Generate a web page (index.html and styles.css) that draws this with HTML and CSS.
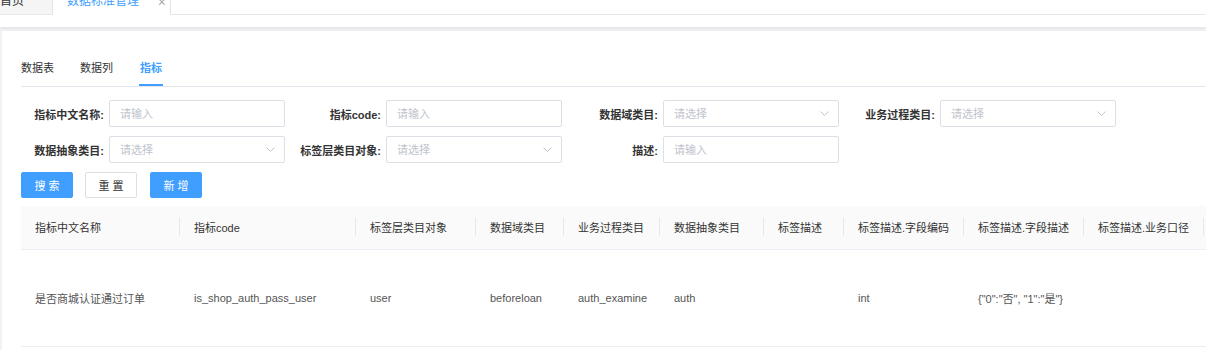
FILE: index.html
```html
<!DOCTYPE html>
<html lang="zh-CN">
<head>
    <meta charset="UTF-8">
    <meta name="viewport" content="width=device-width, initial-scale=1.0">
    <title>数据标准管理</title>
    <link rel="stylesheet" href="styles.css">
</head>
<body>

    <!-- Page tabs at the top -->
    <div class="topbar">
        <div class="page-tabs">
            <div class="page-tab">首页</div>
            <div class="page-tab active">数据标准管理<span class="tab-close">×</span></div>
            <div class="tab-fill"></div>
        </div>
    </div>

    <div class="main">
        <div class="card">

            <!-- Sub tabs -->
            <div class="sub-tabs">
                <div class="sub-tab">数据表</div>
                <div class="sub-tab">数据列</div>
                <div class="sub-tab active">指标</div>
            </div>

            <!-- Search form -->
            <div class="search-form">
                <div class="form-item">
                    <label>指标中文名称:</label>
                    <input type="text" placeholder="请输入">
                </div>
                <div class="form-item">
                    <label>指标code:</label>
                    <input type="text" placeholder="请输入">
                </div>
                <div class="form-item">
                    <label>数据域类目:</label>
                    <div class="select">
                        <input type="text" placeholder="请选择" readonly>
                        <svg class="arrow" width="9" height="5" viewBox="0 0 9 5"><path d="M0.5 0.5 L4.5 4.5 L8.5 0.5" fill="none" stroke="#c0c4cc" stroke-width="1"/></svg>
                    </div>
                </div>
                <div class="form-item">
                    <label>业务过程类目:</label>
                    <div class="select">
                        <input type="text" placeholder="请选择" readonly>
                        <svg class="arrow" width="9" height="5" viewBox="0 0 9 5"><path d="M0.5 0.5 L4.5 4.5 L8.5 0.5" fill="none" stroke="#c0c4cc" stroke-width="1"/></svg>
                    </div>
                </div>
                <div class="form-item">
                    <label>数据抽象类目:</label>
                    <div class="select">
                        <input type="text" placeholder="请选择" readonly>
                        <svg class="arrow" width="9" height="5" viewBox="0 0 9 5"><path d="M0.5 0.5 L4.5 4.5 L8.5 0.5" fill="none" stroke="#c0c4cc" stroke-width="1"/></svg>
                    </div>
                </div>
                <div class="form-item">
                    <label>标签层类目对象:</label>
                    <div class="select">
                        <input type="text" placeholder="请选择" readonly>
                        <svg class="arrow" width="9" height="5" viewBox="0 0 9 5"><path d="M0.5 0.5 L4.5 4.5 L8.5 0.5" fill="none" stroke="#c0c4cc" stroke-width="1"/></svg>
                    </div>
                </div>
                <div class="form-item">
                    <label>描述:</label>
                    <input type="text" placeholder="请输入">
                </div>
            </div>

            <!-- Buttons -->
            <div class="actions">
                <button class="btn btn-primary">搜 索</button>
                <button class="btn">重 置</button>
                <button class="btn btn-primary">新 增</button>
            </div>

            <!-- Result table -->
            <div class="table-wrap">
                <table class="data-table">
                    <colgroup>
                        <col style="width:159px">
                        <col style="width:176px">
                        <col style="width:120px">
                        <col style="width:88px">
                        <col style="width:96px">
                        <col style="width:104px">
                        <col style="width:80px">
                        <col style="width:120px">
                        <col style="width:120px">
                        <col style="width:120px">
                        <col style="width:120px">
                    </colgroup>
                    <thead>
                        <tr>
                            <th>指标中文名称</th>
                            <th>指标code</th>
                            <th>标签层类目对象</th>
                            <th>数据域类目</th>
                            <th>业务过程类目</th>
                            <th>数据抽象类目</th>
                            <th>标签描述</th>
                            <th>标签描述.字段编码</th>
                            <th>标签描述.字段描述</th>
                            <th>标签描述.业务口径</th>
                            <th>操作</th>
                        </tr>
                    </thead>
                    <tbody>
                        <tr>
                            <td>是否商城认证通过订单</td>
                            <td>is_shop_auth_pass_user</td>
                            <td>user</td>
                            <td>beforeloan</td>
                            <td>auth_examine</td>
                            <td>auth</td>
                            <td></td>
                            <td>int</td>
                            <td>{"0":"否", "1":"是"}</td>
                            <td></td>
                            <td></td>
                        </tr>
                    </tbody>
                </table>
            </div>

        </div>
    </div>

</body>
</html>
```

FILE: styles.css
```css
/* Reset */
html, body {
    margin: 0;
    padding: 0;
    font-family: "Liberation Sans", "Noto Sans CJK SC", sans-serif;
    background-color: #ffffff;
    height: 100%;
    overflow: hidden;
}

/* Top page tabs */
.topbar {
    height: 27px;
    background-color: #fff;
    position: relative;
    z-index: 1;
    box-shadow: 0 1px 4px rgba(0, 0, 0, 0.08);
}

.page-tabs {
    display: flex;
    height: 15px;
    overflow: hidden;
}

.page-tab {
    height: 23px;
    margin-top: -8px;
    line-height: 18px;
    font-size: 12px;
    color: #333;
    box-sizing: border-box;
    border-bottom: 1px solid #e8e8e8;
    border-right: 1px solid #e4e4e4;
    background-color: #f5f5f5;
    width: 53px;
}

.page-tab.active {
    width: 117px;
    margin-left: 1px;
    padding-left: 13px;
    background-color: #fff;
    border-bottom: none;
    color: #409eff;
    position: relative;
}

.tab-close {
    position: absolute;
    right: 4px;
    top: 1px;
    color: #aaa;
    font-size: 14px;
}

.tab-fill {
    flex: 1;
    border-bottom: 1px solid #e8e8e8;
}

/* Content area */
.main {
    background-color: #f0f2f5;
    padding: 4px 0 0 2px;
    height: calc(100% - 27px);
    box-sizing: border-box;
}

.card {
    background-color: #fff;
    padding: 20px 0 0 19px;
    height: 100%;
    box-sizing: border-box;
    overflow: hidden;
}

/* Sub tabs */
.sub-tabs {
    display: flex;
    height: 36px;
    border-bottom: 1px solid #e4e7ed;
    box-sizing: border-box;
}

.sub-tab {
    line-height: 35px;
    font-size: 11px;
    color: #303133;
    padding: 0 13px;
}

.sub-tab:first-child {
    padding-left: 0;
}

.sub-tab.active {
    color: #409eff;
    font-weight: bold;
    box-shadow: inset 0 -2px 0 #409eff;
    padding: 0;
    margin-left: 13px;
    width: 24px;
    text-align: center;
}

/* Search form */
.search-form {
    display: grid;
    grid-template-columns: repeat(4, 264px);
    column-gap: 13px;
    row-gap: 9px;
    margin-top: 13px;
}

.form-item {
    display: flex;
    align-items: center;
}

.form-item label {
    width: 88px;
    box-sizing: border-box;
    padding-right: 5px;
    text-align: right;
    font-size: 11px;
    font-weight: bold;
    color: #333;
}

.form-item input {
    width: 176px;
    height: 27px;
    box-sizing: border-box;
    border: 1px solid #dcdfe6;
    border-radius: 2px;
    padding: 0 10px;
    font-size: 11px;
    font-family: inherit;
    color: #606266;
    outline: none;
}

.form-item input::placeholder {
    color: #c0c4cc;
}

.select {
    position: relative;
    width: 176px;
    height: 27px;
}

.select .arrow {
    position: absolute;
    right: 10px;
    top: 11px;
}

/* Buttons */
.actions {
    display: flex;
    gap: 12px;
    margin-top: 9px;
}

.btn {
    width: 52px;
    height: 26px;
    border: 1px solid #dcdfe6;
    border-radius: 2px;
    background-color: #fff;
    color: #333;
    font-size: 11px;
    font-family: inherit;
    padding: 0;
    cursor: pointer;
}

.btn-primary {
    background-color: #409eff;
    border-color: #409eff;
    color: #fff;
}

.actions .btn:last-child {
    margin-left: 1px;
}

/* Table */
.table-wrap {
    margin-top: 8px;
    overflow: hidden;
}

.data-table {
    table-layout: fixed;
    border-collapse: collapse;
    width: 1303px;
    font-size: 11px;
}

.data-table th {
    position: relative;
    height: 43px;
    box-sizing: border-box;
    background-color: #fafafa;
    border-bottom: 1px solid #ebeef5;
    text-align: left;
    font-weight: normal;
    color: #333;
    padding: 0 14px;
    white-space: nowrap;
}

.data-table th::before {
    content: "";
    position: absolute;
    right: 0;
    top: 12px;
    width: 1px;
    height: 18px;
    background-color: #e8e8e8;
}

.data-table td {
    height: 97px;
    box-sizing: border-box;
    border-bottom: 1px solid #ebeef5;
    color: #555;
    padding: 0 14px;
    white-space: nowrap;
}
```
